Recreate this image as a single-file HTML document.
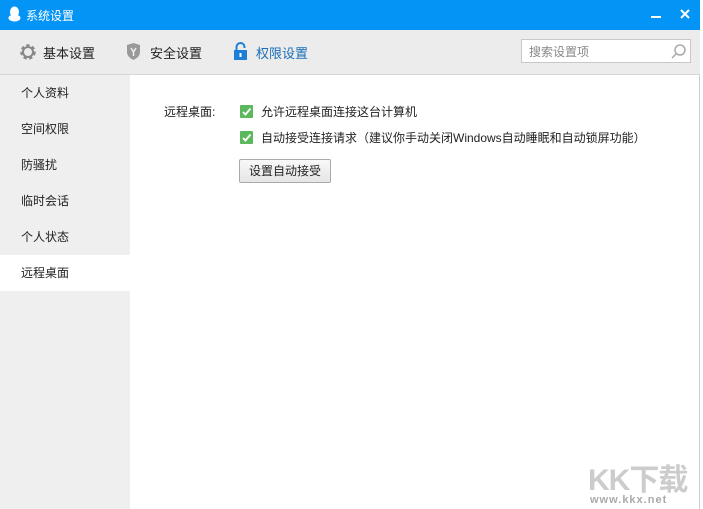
<!DOCTYPE html>
<html><head><meta charset="utf-8"><style>
*{margin:0;padding:0;box-sizing:border-box}
body{width:703px;height:509px;background:#fff;font-family:"Liberation Sans","Noto Sans CJK SC",sans-serif;font-size:12px;color:#222;position:relative;overflow:hidden}
.win{position:absolute;left:0;top:0;width:700px;height:509px;border-right:1px solid #cfcfcf}
.title{position:absolute;left:0;top:0;width:700px;height:30px;background:#0494f6;color:#fff;font-size:12px}
.title span{position:absolute;left:26px;top:7px}
.tool{position:absolute;left:0;top:30px;width:700px;height:45px;background:#ececec;border-bottom:1px solid #d6d6d6}
.tab{position:absolute;top:13px;font-size:13px}
.side{position:absolute;left:0;top:75px;width:130px;height:434px;background:#efeff0}
.side div{height:36px;line-height:36px;padding-left:21px;font-size:12px}
.side .sel{background:#fff}
.cb{position:absolute;width:13px;height:13px;background:#5cb85c;border-radius:1px}
.lbl{position:absolute;font-size:12px}
</style></head><body><div class="win">
<div class="title">
<svg style="position:absolute;left:8px;top:6px" width="13" height="16" viewBox="0 0 13 16"><ellipse cx="6.5" cy="6" rx="4.5" ry="5.5" fill="#fff"/><ellipse cx="6.5" cy="12" rx="6" ry="3.5" fill="#fff"/></svg>
<span>系统设置</span>
<div style="position:absolute;left:651px;top:16px;width:10px;height:2px;background:#fff"></div>
<svg style="position:absolute;left:680px;top:9px" width="10" height="10"><path d="M1 1L9 9M9 1L1 9" stroke="#fff" stroke-width="2"/></svg>
</div>
<div class="tool">
<svg style="position:absolute;left:19px;top:13px" width="18" height="18" viewBox="0 0 18 18"><circle cx="9" cy="9" r="6" fill="none" stroke="#888" stroke-width="3.5" stroke-dasharray="3 2.3"/><circle cx="9" cy="9" r="5" fill="none" stroke="#888" stroke-width="2"/></svg>
<span class="tab" style="left:43px">基本设置</span>
<svg style="position:absolute;left:126px;top:13px" width="15" height="17" viewBox="0 0 15 17"><path d="M1 2L7.5 0L14 2L14 9Q14 14 7.5 17Q1 14 1 9Z" fill="#999"/><path d="M5 5L7.5 9L10 5M7.5 9V13" stroke="#eee" stroke-width="1.5" fill="none"/></svg>
<span class="tab" style="left:150px">安全设置</span>
<svg style="position:absolute;left:233px;top:12px" width="15" height="18" viewBox="0 0 15 18"><path d="M3.5 8V5a4 4 0 0 1 8 0v1" stroke="#1b7fd6" stroke-width="2" fill="none"/><rect x="1" y="8" width="13" height="10" fill="#1b7fd6"/><rect x="6.5" y="11" width="2" height="4" fill="#fff"/></svg>
<span class="tab" style="left:256px;color:#1b6fb8">权限设置</span>
<div style="position:absolute;left:521px;top:9px;width:170px;height:24px;border:1px solid #c8c8c8;background:#fff">
<span style="position:absolute;left:7px;top:3px;color:#888;font-size:12px">搜索设置项</span>
<svg style="position:absolute;left:148px;top:3px" width="17" height="17"><circle cx="10" cy="7" r="5" fill="none" stroke="#aaa" stroke-width="1.5"/><path d="M6.5 10.5L2 15" stroke="#aaa" stroke-width="1.5"/></svg>
</div>
</div>
<div class="side">
<div>个人资料</div><div>空间权限</div><div>防骚扰</div><div>临时会话</div><div>个人状态</div><div class="sel">远程桌面</div>
</div>
<span class="lbl" style="left:164px;top:103px">远程桌面:</span>
<div class="cb" style="left:240px;top:105px"></div>
<svg style="position:absolute;left:240px;top:105px" width="13" height="13"><path d="M3 7L5.5 9.5L10.5 3.5" stroke="#fff" stroke-width="1.8" fill="none"/></svg>
<span class="lbl" style="left:261px;top:103px">允许远程桌面连接这台计算机</span>
<div class="cb" style="left:240px;top:131px"></div>
<svg style="position:absolute;left:240px;top:131px" width="13" height="13"><path d="M3 7L5.5 9.5L10.5 3.5" stroke="#fff" stroke-width="1.8" fill="none"/></svg>
<span class="lbl" style="left:261px;top:129px">自动接受连接请求（建议你手动关闭Windows自动睡眠和自动锁屏功能）</span>
<div style="position:absolute;left:239px;top:159px;width:92px;height:24px;border:1px solid #aaa;border-radius:2px;background:linear-gradient(#f8f8f8,#e6e6e6);text-align:center;line-height:22px;font-size:12px">设置自动接受</div>
<div style="position:absolute;left:588px;top:455px;font-size:30px;font-weight:bold;color:#ccc;letter-spacing:-1px">KK下载</div>
<div style="position:absolute;left:590px;top:494px;font-size:11px;color:#aaa;font-weight:bold;letter-spacing:1px">www.kkx.net</div>
</div></body></html>
